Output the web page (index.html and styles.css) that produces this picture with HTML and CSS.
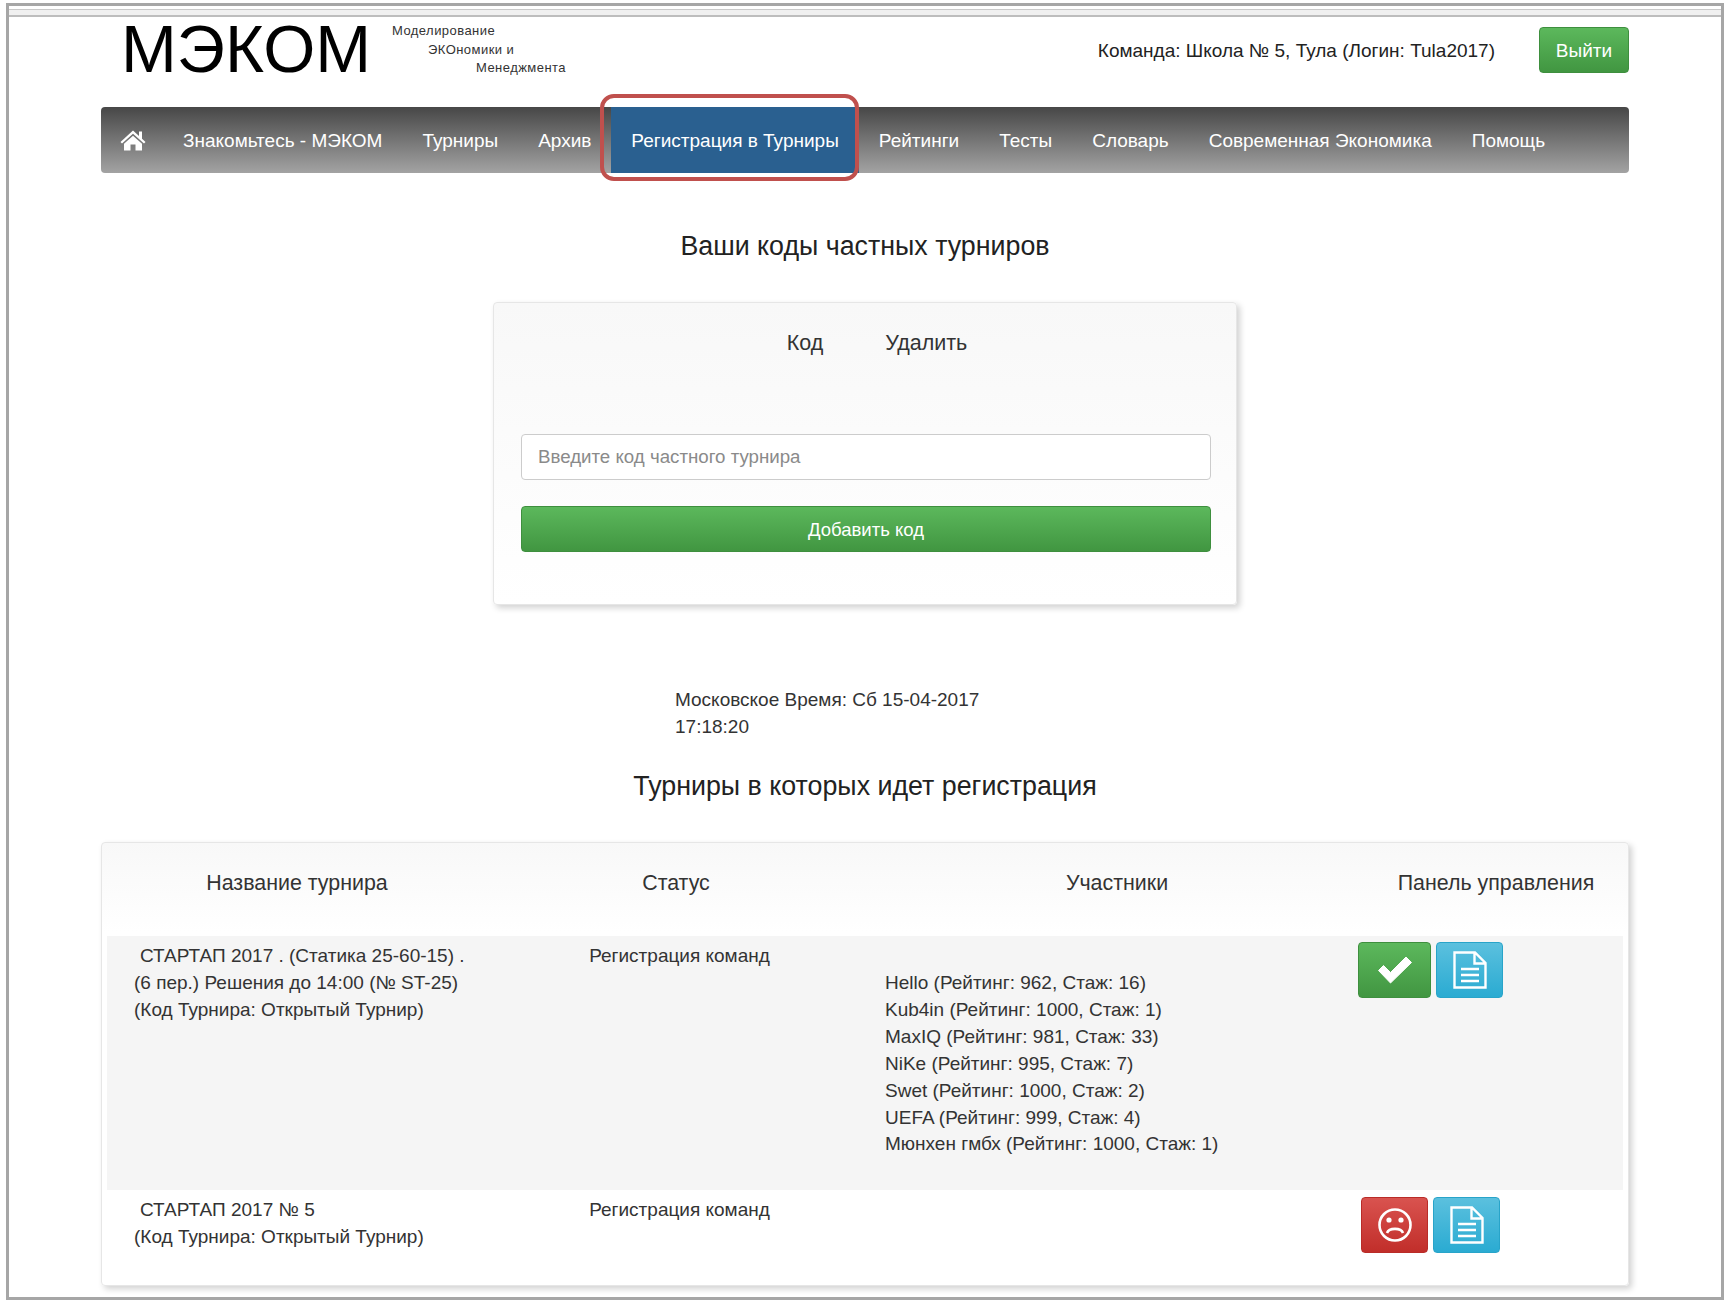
FILE: index.html
```html
<!DOCTYPE html>
<html>
<head>
    <title>МЭКОМ</title>
    <link rel="stylesheet" href="styles.css">
</head>
<body>
    <div class="frame">
        <div class="top-strip"></div>

        <div class="container">
            <!-- Header -->
            <div class="header">
                <div class="logo">МЭКОМ</div>
                <div class="tagline">
                    <div class="tag-1">Моделирование</div>
                    <div class="tag-2">ЭКОномики и</div>
                    <div class="tag-3">Менеджмента</div>
                </div>
                <div class="team">Команда: Школа № 5, Тула (Логин: Tula2017)</div>
                <a class="btn btn-green btn-logout">Выйти</a>
            </div>

            <!-- Menu -->
            <div class="navbar">
                <a class="nav-home">
                    <svg width="26" height="22" viewBox="0 0 26 22"><path fill="#fff" d="M13 1.5 L19 7 V2.5 H22 V9.8 L25.5 13 L24 14.6 L13 4.8 L2 14.6 L.5 13 Z M13 6.8 L22 14.8 V21.5 H15.5 V15.5 H10.5 V21.5 H4 V14.8 Z"/></svg>
                </a>
                <a class="nav-item">Знакомьтесь - МЭКОМ</a>
                <a class="nav-item">Турниры</a>
                <a class="nav-item">Архив</a>
                <a class="nav-item active">Регистрация в Турниры</a>
                <a class="nav-item">Рейтинги</a>
                <a class="nav-item">Тесты</a>
                <a class="nav-item">Словарь</a>
                <a class="nav-item">Современная Экономика</a>
                <a class="nav-item">Помощь</a>
            </div>

            <h2 class="title-codes">Ваши коды частных турниров</h2>

            <!-- Private codes -->
            <div class="card code-card">
                <div class="code-head">
                    <span>Код</span>
                    <span>Удалить</span>
                </div>
                <input class="code-input" type="text" placeholder="Введите код частного турнира">
                <a class="btn btn-green btn-add">Добавить код</a>
            </div>

            <p class="clock">Московское Время: Сб 15-04-2017<br>17:18:20</p>

            <h2 class="title-open">Турниры в которых идет регистрация</h2>

            <!-- Tournaments -->
            <div class="card list-card">
                <div class="row row-head">
                    <div class="cell-name">Название турнира</div>
                    <div class="cell-status">Статус</div>
                    <div class="cell-members">Участники</div>
                    <div class="cell-panel">Панель управления</div>
                </div>

                <div class="row row-odd">
                    <div class="t-name"><span class="t-first">СТАРТАП 2017 . (Статика 25-60-15) .</span><br>(6 пер.) Решения до 14:00 (№ ST-25)<br>(Код Турнира: Открытый Турнир)</div>
                    <div class="t-status">Регистрация команд</div>
                    <div class="t-members">
                        Hello (Рейтинг: 962, Стаж: 16)<br>
                        Kub4in (Рейтинг: 1000, Стаж: 1)<br>
                        MaxIQ (Рейтинг: 981, Стаж: 33)<br>
                        NiKe (Рейтинг: 995, Стаж: 7)<br>
                        Swet (Рейтинг: 1000, Стаж: 2)<br>
                        UEFA (Рейтинг: 999, Стаж: 4)<br>
                        Мюнхен гмбх (Рейтинг: 1000, Стаж: 1)
                    </div>
                    <div class="t-panel">
                        <a class="btn btn-green btn-join">
                            <svg width="36" height="28" viewBox="0 0 36 28"><path fill="#fff" d="M1.5 14.5 L6.5 9.5 L13.5 16.5 L29 1 L34.5 6.5 L13.5 27 Z" stroke="#fff" stroke-linejoin="round"/></svg>
                        </a>
                        <a class="btn btn-blue btn-doc">
                            <svg width="34" height="38" viewBox="0 0 34 38"><path fill="none" stroke="#fff" stroke-width="2.4" d="M1.5 1.5 H22 L32.5 12 V36.5 H1.5 Z M21.5 2 V12.5 H32"/><path stroke="#fff" stroke-width="2.4" d="M8 18 H26 M8 24 H26 M8 30 H26"/></svg>
                        </a>
                    </div>
                </div>

                <div class="row row-even">
                    <div class="t-name"><span class="t-first">СТАРТАП 2017 № 5</span><br>(Код Турнира: Открытый Турнир)</div>
                    <div class="t-status">Регистрация команд</div>
                    <div class="t-members"></div>
                    <div class="t-panel t-panel-left">
                        <a class="btn btn-red btn-leave">
                            <svg width="36" height="36" viewBox="0 0 36 36"><circle cx="18" cy="18" r="15.5" fill="none" stroke="#fff" stroke-width="2.6"/><circle cx="12" cy="13" r="2.6" fill="#fff"/><circle cx="24" cy="13" r="2.6" fill="#fff"/><path fill="none" stroke="#fff" stroke-width="2.6" d="M10 26 C12 20.5 24 20.5 26 26"/></svg>
                        </a>
                        <a class="btn btn-blue btn-doc">
                            <svg width="34" height="38" viewBox="0 0 34 38"><path fill="none" stroke="#fff" stroke-width="2.4" d="M1.5 1.5 H22 L32.5 12 V36.5 H1.5 Z M21.5 2 V12.5 H32"/><path stroke="#fff" stroke-width="2.4" d="M8 18 H26 M8 24 H26 M8 30 H26"/></svg>
                        </a>
                    </div>
                </div>
            </div>
        </div>

        <!-- Red marker over the active menu item -->
        <div class="marker"></div>
    </div>
</body>
</html>
```

FILE: styles.css
```css
* {
    box-sizing: border-box;
}
body {
    font-family: "Liberation Sans", Arial, sans-serif;
    font-size: 19px;
    line-height: 27px;
    color: #333;
    background-color: #fff;
    margin: 0;
    padding: 3px 3px 4px 6px;
}
a {
    text-decoration: none;
}

.frame {
    position: relative;
    height: 1297px;
    border: 3px solid #a6a6a6;
}
.top-strip {
    height: 11px;
    margin-top: 0;
    border-bottom: 2px solid #bdbdbd;
    background: linear-gradient(#fff 3px, #c9c9c9 3px, #c9c9c9 4px, #f0f0f0 4px);
}
.container {
    padding: 0 92px;
}

/* Header */
.header {
    display: flex;
    align-items: flex-start;
    height: 90px;
}
.logo {
    font-size: 67px;
    line-height: 60px;
    color: #000;
    margin: 2px 0 0 20px;
    width: 271px;
}
.tagline {
    font-size: 13px;
    line-height: 18.5px;
    letter-spacing: 0.45px;
    color: #333;
    margin-top: 5px;
}
.tag-2 {
    padding-left: 36px;
}
.tag-3 {
    padding-left: 84px;
}
.team {
    margin-left: auto;
    margin-top: 20px;
    color: #222;
}
.btn {
    display: flex;
    align-items: center;
    justify-content: center;
    color: #fff;
    border-radius: 4px;
    border: 1px solid transparent;
}
.btn-green {
    background: linear-gradient(#5cb85c, #419641);
    border-color: #3e8f3e;
}
.btn-blue {
    background: linear-gradient(#5bc0de, #2aabd2);
    border-color: #28a4c9;
}
.btn-red {
    background: linear-gradient(#d9534f, #c12e2a);
    border-color: #b92c28;
}
.btn-logout {
    width: 90px;
    height: 46px;
    margin: 10px 0 0 44px;
}

/* Menu */
.navbar {
    display: flex;
    height: 66px;
    border-radius: 4px;
    background: linear-gradient(#474747, #a3a3a3);
    color: #fff;
}
.nav-home {
    display: flex;
    align-items: center;
    padding-left: 19px;
    width: 62px;
}
.nav-item {
    display: flex;
    align-items: center;
    color: #fff;
    padding: 0 20px;
}
.nav-item.active {
    background-color: #2a6090;
}
.marker {
    position: absolute;
    left: 591px;
    top: 88px;
    width: 259px;
    height: 87px;
    border: 4px solid #c0504d;
    border-radius: 14px;
}

/* Titles */
h2 {
    font-size: 26.8px;
    font-weight: normal;
    line-height: 32px;
    text-align: center;
    color: #222;
    margin: 0;
}
.title-codes {
    margin-top: 57px;
}
.title-open {
    margin-top: 30px;
}

/* Cards */
.card {
    border: 1px solid #e6e6e6;
    border-radius: 4px;
    background-color: #fff;
    box-shadow: 3px 3px 6px rgba(0, 0, 0, 0.18);
}
.code-card {
    width: 744px;
    height: 303px;
    margin: 40px auto 0;
    padding: 26px 25px 0 27px;
    background: linear-gradient(#f8f8f8, #fff);
}
.code-head {
    display: flex;
    justify-content: center;
    gap: 62px;
    height: 105px;
    font-size: 21.5px;
    line-height: 28px;
    padding-left: 22px;
    color: #333;
}
.code-input {
    display: block;
    width: 100%;
    height: 46px;
    padding: 0 16px;
    font-family: inherit;
    font-size: 18.7px;
    border: 1px solid #ccc;
    border-radius: 4px;
    background-color: #fff;
}
.code-input::placeholder {
    color: #8a8a8a;
}
.btn-add {
    height: 46px;
    margin-top: 26px;
    font-size: 18.5px;
}

.clock {
    width: 340px;
    margin: 81px 0 0 570px;
    padding-left: 4px;
}

/* Tournament list */
.list-card {
    height: 444px;
    margin-top: 40px;
    padding: 0 5px;
    background: linear-gradient(#f8f8f8 0, #fff 90px);
}
.row {
    display: grid;
    grid-template-columns: 380px 378px 480px 278px;
}
.row-head {
    height: 93px;
    font-size: 21.4px;
    text-align: center;
    padding-top: 27px;
}
.cell-members {
    padding-left: 24px;
}
.cell-panel {
    padding-left: 24px;
}
.row-odd {
    height: 254px;
    background-color: #f5f5f5;
}
.t-name {
    padding: 6px 0 0 27px;
}
.t-first {
    padding-left: 6px;
}
.t-status {
    padding: 6px 0 0 7px;
    text-align: center;
}
.t-members {
    padding: 34px 0 0 20px;
    line-height: 26.9px;
}
.t-panel {
    display: flex;
    gap: 5px;
    padding: 6px 0 0 13px;
}
.t-panel-left {
    padding: 7px 0 0 16px;
}
.btn-join {
    width: 73px;
    height: 56px;
}
.btn-leave {
    width: 67px;
    height: 56px;
}
.btn-doc {
    width: 67px;
    height: 56px;
}
```
